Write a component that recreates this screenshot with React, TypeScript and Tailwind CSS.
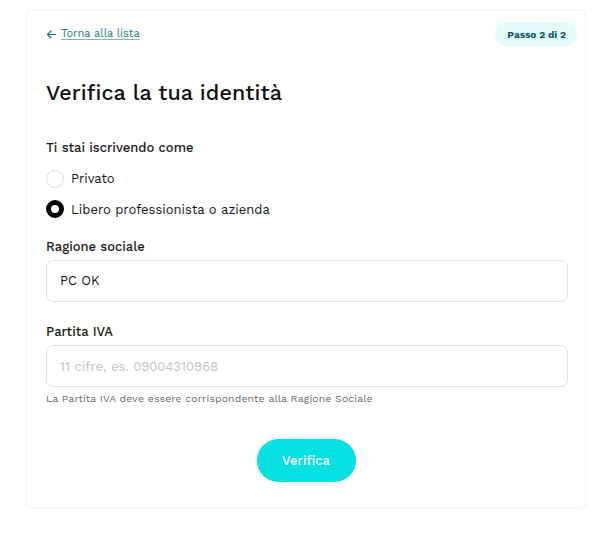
import React, { useState } from 'react';

const font = { fontFamily: '"Work Sans", Inter, "Noto Sans", sans-serif' };

export default function App() {
  const [kind, setKind] = useState<'privato' | 'azienda'>('azienda');

  return (
    <div className="min-h-[541px] w-[610px] bg-white pt-[9px] pl-[26px]" style={font}>
      <div className="w-[560px] h-[499px] rounded-md border border-[#f2f2f2] bg-white shadow-[0_1px_4px_rgba(0,0,0,0.03)] px-[19px]">
        {/* Top bar */}
        <div className="flex items-center justify-between pt-[12px] -mr-[11px]">
          <a href="#" className="flex items-center gap-[4px] text-[11px] text-[#1f7f8a] underline underline-offset-2 decoration-[#7fb8be]">
            <svg width="11" height="11" viewBox="0 0 12 12" fill="none" stroke="#1f6f7a" strokeWidth="1.3" strokeLinecap="round" strokeLinejoin="round">
              <path d="M10.5 6H1.8" />
              <path d="M5.5 2.2L1.7 6l3.8 3.8" />
            </svg>
            Torna alla lista
          </a>
          <span className="h-[24px] pl-[12px] pr-[11px] rounded-full bg-[#e4fbfc] text-[#0f5a64] text-[10px] font-bold flex items-center">
            Passo 2 di 2
          </span>
        </div>

        <h1 className="mt-[33px] text-[21.5px] leading-[28px] font-medium text-[#111] tracking-[0.1px]">
          Verifica la tua identità
        </h1>

        <p className="mt-[32px] text-[13px] leading-[18px] font-medium text-[#1a1a1a]">Ti stai iscrivendo come</p>

        <div className="mt-[12px] flex flex-col gap-[11px]">
          <label className="flex items-center gap-[7px] cursor-pointer" onClick={() => setKind('privato')}>
            <span
              className={
                kind === 'privato'
                  ? 'w-[18px] h-[18px] rounded-full border-[5px] border-black bg-white'
                  : 'w-[18px] h-[18px] rounded-full border border-[#dcdcdc] bg-white'
              }
            />
            <span className="text-[13px] text-[#1a1a1a]">Privato</span>
          </label>
          <label className="flex items-center gap-[7px] cursor-pointer" onClick={() => setKind('azienda')}>
            <span
              className={
                kind === 'azienda'
                  ? 'w-[18px] h-[18px] rounded-full border-[5px] border-black bg-white'
                  : 'w-[18px] h-[18px] rounded-full border border-[#dcdcdc] bg-white'
              }
            />
            <span className="text-[13px] text-[#1a1a1a]">Libero professionista o azienda</span>
          </label>
        </div>

        <p className="mt-[19px] text-[13px] leading-[18px] font-medium text-[#1a1a1a]">Ragione sociale</p>
        <div className="mt-[4px] w-[522px] h-[42px] rounded-[7px] border border-[#e2e2e2] flex items-center px-[13px] text-[13px] text-[#1a1a1a]">
          PC OK
        </div>

        <p className="mt-[21px] text-[13px] leading-[18px] font-medium text-[#1a1a1a]">Partita IVA</p>
        <input
          className="mt-[4px] w-[522px] h-[42px] rounded-[7px] border border-[#e2e2e2] px-[13px] text-[13px] text-[#1a1a1a] placeholder:text-[#c4c4c4] outline-none block"
          placeholder="11 cifre, es. 09004310968"
        />
        <p className="mt-[5px] text-[10.5px] leading-[14px] text-[#6b6b6b] tracking-[0.1px]">
          La Partita IVA deve essere corrispondente alla Ragione Sociale
        </p>

        <div className="mt-[33px] flex justify-center">
          <button className="w-[99px] h-[43px] rounded-full bg-[#05e0e0] text-white text-[13px] font-medium">
            Verifica
          </button>
        </div>
      </div>
    </div>
  );
}
